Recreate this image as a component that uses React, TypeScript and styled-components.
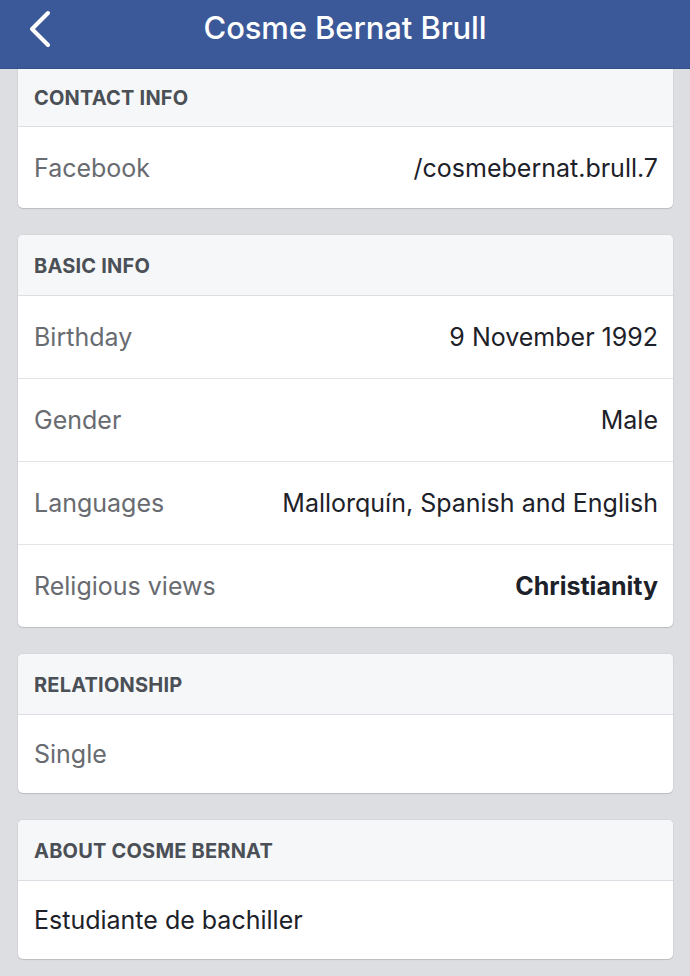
import React from "react";
import styled, { createGlobalStyle } from "styled-components";

const Global = createGlobalStyle`
  html, body { margin: 0; padding: 0; }
  body {
    background: #dddee2;
    font-family: Inter, Roboto, "Noto Sans", "Liberation Sans", sans-serif;
    -webkit-font-smoothing: antialiased;
  }
`;

const Page = styled.div`
  width: 690px;
  min-height: 976px;
  background: #dddee2;
  overflow: hidden;
`;

const NavBar = styled.header`
  height: 68px;
  background: #3b5998;
  border-bottom: 1px solid #34508a;
  display: flex;
  align-items: center;
  justify-content: center;
  position: relative;
`;

const BackButton = styled.button`
  position: absolute;
  left: 26px;
  top: 9px;
  width: 28px;
  height: 40px;
  padding: 0;
  border: none;
  background: transparent;
  display: flex;
  align-items: center;
  justify-content: center;
`;

const Title = styled.h1`
  margin: 0 0 13px 0;
  color: #ffffff;
  font-size: 31px;
  font-weight: 500;
  letter-spacing: -0.1px;
`;

const List = styled.main`
  display: flex;
  flex-direction: column;
  gap: 27px;
  padding: 0 17px 0 18px;
`;

const Card = styled.section<{ $first?: boolean }>`
  background: #ffffff;
  border-radius: ${(p) => (p.$first ? "0 0 5px 5px" : "5px")};
  box-shadow: 0 1px 1px rgba(0, 0, 0, 0.12), 0 0 0 1px rgba(0, 0, 0, 0.03);
  overflow: hidden;
`;

const CardHeader = styled.div<{ $first?: boolean }>`
  height: ${(p) => (p.$first ? "56px" : "59px")};
  background: #f6f7f9;
  border-bottom: 1px solid #dcdee3;
  display: flex;
  align-items: center;
  padding: 1px 16px 0;
  color: #4b4f56;
  font-size: 20px;
  font-weight: 700;
  letter-spacing: 0.2px;
`;

const Row = styled.div<{ $h?: number }>`
  height: ${(p) => p.$h ?? 82}px;
  display: flex;
  align-items: center;
  justify-content: space-between;
  padding: 0 15px 0 16px;
  & + & {
    border-top: 1px solid #e3e4e8;
  }
`;

const Label = styled.span`
  color: #686b70;
  font-size: 25px;
  font-weight: 400;
`;

const Value = styled.span<{ $bold?: boolean }>`
  color: #1d2129;
  font-size: 25px;
  font-weight: ${(p) => (p.$bold ? 650 : 400)};
`;

const Text = styled.span`
  color: #1d2129;
  font-size: 25px;
`;

const Chevron = () => (
  <svg width="26" height="38" viewBox="0 0 26 38" fill="none">
    <path
      d="M21 3 L5 19 L21 35"
      stroke="#ffffff"
      strokeWidth="4"
      strokeLinecap="round"
      strokeLinejoin="round"
    />
  </svg>
);

export default function App() {
  return (
    <Page>
      <Global />
      <NavBar>
        <BackButton aria-label="Back">
          <Chevron />
        </BackButton>
        <Title>Cosme Bernat Brull</Title>
      </NavBar>
      <List>
        <Card $first>
          <CardHeader $first>CONTACT INFO</CardHeader>
          <Row $h={81}>
            <Label>Facebook</Label>
            <Value>/cosmebernat.brull.7</Value>
          </Row>
        </Card>
        <Card>
          <CardHeader>BASIC INFO</CardHeader>
          <Row>
            <Label>Birthday</Label>
            <Value>9 November 1992</Value>
          </Row>
          <Row>
            <Label>Gender</Label>
            <Value>Male</Value>
          </Row>
          <Row>
            <Label>Languages</Label>
            <Value>Mallorquín, Spanish and English</Value>
          </Row>
          <Row>
            <Label>Religious views</Label>
            <Value $bold>Christianity</Value>
          </Row>
        </Card>
        <Card>
          <CardHeader>RELATIONSHIP</CardHeader>
          <Row $h={78}>
            <Label>Single</Label>
          </Row>
        </Card>
        <Card>
          <CardHeader>ABOUT COSME BERNAT</CardHeader>
          <Row $h={78}>
            <Text>Estudiante de bachiller</Text>
          </Row>
        </Card>
      </List>
    </Page>
  );
}
